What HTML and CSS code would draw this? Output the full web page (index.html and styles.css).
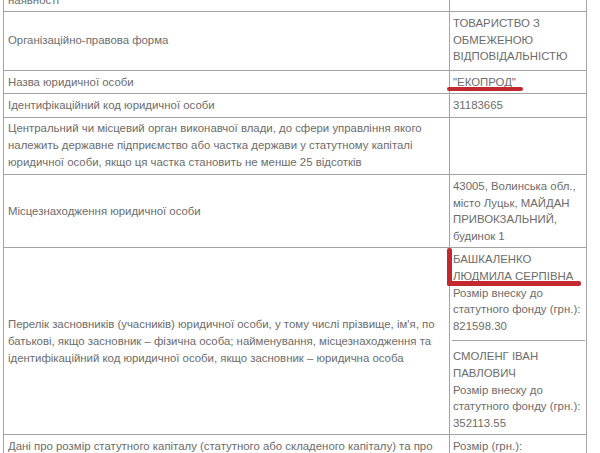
FILE: index.html
```html
<!DOCTYPE html>
<html lang="uk">
<head>
<meta charset="utf-8">
<title>Витяг</title>
<link rel="stylesheet" href="styles.css">
</head>
<body>
<div class="page">
  <table class="reg">
    <colgroup><col class="c-label"><col class="c-value"></colgroup>
    <tr><td>наявності</td><td class="val"></td></tr>
    <tr><td>Організаційно-правова форма</td><td class="val val-tall">ТОВАРИСТВО З<br>ОБМЕЖЕНОЮ<br>ВІДПОВІДАЛЬНІСТЮ</td></tr>
    <tr><td>Назва юридичної особи</td><td class="val">"ЕКОПРОД"</td></tr>
    <tr><td>Ідентифікаційний код юридичної особи</td><td class="val">31183665</td></tr>
    <tr><td>Центральний чи місцевий орган виконавчої влади, до сфери управління якого<br>належить державне підприємство або частка держави у статутному капіталі<br>юридичної особи, якщо ця частка становить не менше 25 відсотків</td><td class="val"></td></tr>
    <tr><td>Місцезнаходження юридичної особи</td><td class="val">43005, Волинська обл.,<br>місто Луцьк, МАЙДАН<br>ПРИВОКЗАЛЬНИЙ,<br>будинок 1</td></tr>
    <tr><td>Перелік засновників (учасників) юридичної особи, у тому числі прізвище, ім'я, по<br>батькові, якщо засновник – фізична особа; найменування, місцезнаходження та<br>ідентифікаційний код юридичної особи, якщо засновник – юридична особа</td>
      <td class="val">
        <div class="founder">БАШКАЛЕНКО<br>ЛЮДМИЛА СЕРПІВНА<br>Розмір внеску до<br>статутного фонду (грн.):<br>821598.30</div>
        <div class="founder">СМОЛЕНГ ІВАН<br>ПАВЛОВИЧ<br>Розмір внеску до<br>статутного фонду (грн.):<br>352113.55</div>
      </td></tr>
    <tr><td>Дані про розмір статутного капіталу (статутного або складеного капіталу) та про<br>розмір частки кожного із засновників</td><td class="val">Розмір (грн.):<br>1173711.85</td></tr>
  </table>
  <span class="mark mark-name"></span>
  <span class="mark mark-founder-v"></span>
  <span class="mark mark-founder-h"></span>
</div>
</body>
</html>
```
FILE: styles.css
```css
html, body {
  margin: 0;
  background: #ffffff;
  overflow: hidden;
}

.page {
  position: relative;
  display: flow-root;
}

.reg {
  border-collapse: collapse;
  table-layout: fixed;
  width: 583px;
  margin: -12px 0 0 3px;
  font-family: "Liberation Sans", Arial, sans-serif;
  font-size: 11.4px;
  line-height: 17px;
  color: #6c6c6c;
}

.c-label { width: 446px; }
.c-value { width: 137px; }

.reg td {
  border: 1px solid #a3a3a3;
  padding: 2.5px 4px;
  vertical-align: middle;
  white-space: nowrap;
}

.reg td.val {
  vertical-align: top;
  line-height: 16.6px;
  padding: 3px;
}

.reg td.val-tall {
  padding-bottom: 5px;
}

.founder + .founder {
  border-top: 1px solid #a3a3a3;
  margin: 6px -2px 0 -1px;
  padding: 7px 2px 0 1px;
}

.mark {
  position: absolute;
  background: #c2282e;
  border-radius: 2px;
}

.mark-name {
  left: 447px;
  top: 87px;
  width: 76px;
  height: 4px;
}

.mark-founder-v {
  left: 447px;
  top: 248px;
  width: 5px;
  height: 38px;
}

.mark-founder-h {
  left: 447px;
  top: 281px;
  width: 134px;
  height: 5px;
}
```
